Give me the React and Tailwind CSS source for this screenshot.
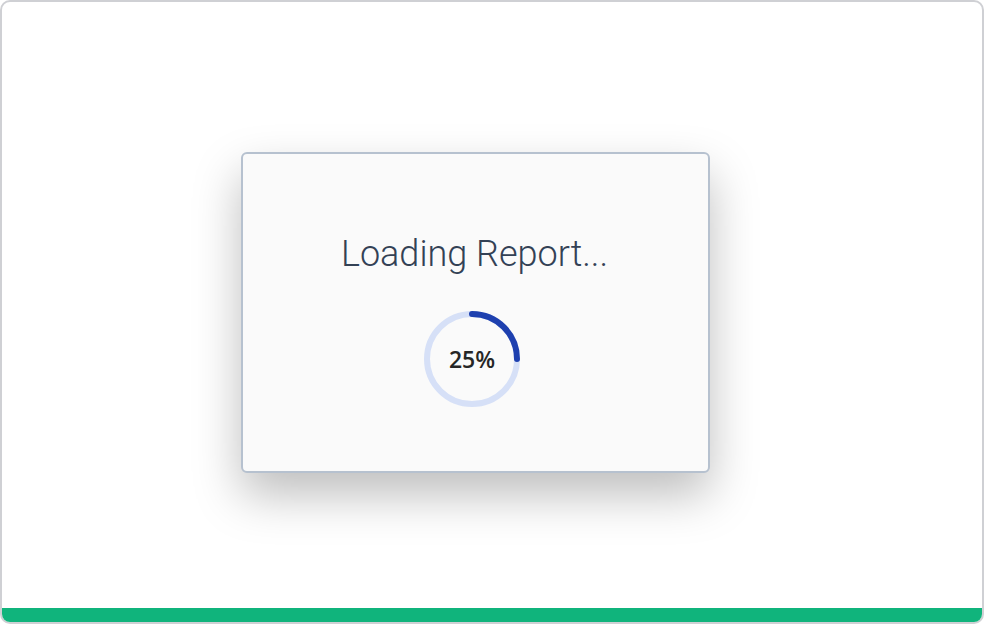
import React from "react";

export default function App() {
  const r = 45;
  const c = 2 * Math.PI * r;
  return (
    <div className="w-[984px] h-[624px] bg-white">
      <div className="w-full h-full rounded-[10px] border-2 border-[#cfd0d4] overflow-hidden flex flex-col bg-white">
        <div className="flex-1 flex items-center pl-[239px] pt-[15px]">
          <div className="w-[469px] h-[321px] rounded-[6px] border-2 border-[#b6c1cf] bg-[#fafafa] shadow-[0_22px_48px_rgba(0,0,0,0.26)] flex flex-col items-center">
            <div
              className="mt-[80px] text-[36px] leading-[40px] font-light text-[#334155] ml-[-2px]"
              style={{ fontFamily: "Roboto, sans-serif" }}
            >
              Loading Report...
            </div>
            <div className="relative mt-[35px] w-[100px] h-[100px] ml-[-7px]">
              <svg width="100" height="100" viewBox="0 0 100 100">
                <circle cx="50" cy="50" r={r} fill="none" stroke="#d6e0f7" strokeWidth="6" />
                <circle
                  cx="50"
                  cy="50"
                  r={r}
                  fill="none"
                  stroke="#1e40af"
                  strokeWidth="6"
                  strokeLinecap="round"
                  strokeDasharray={`${c * 0.25} ${c}`}
                  transform="rotate(-90 50 50)"
                />
              </svg>
              <div
                className="absolute inset-0 flex items-center justify-center text-[23px] font-semibold text-[#262626]"
                style={{ fontFamily: "'Open Sans', sans-serif" }}
              >
                25%
              </div>
            </div>
          </div>
        </div>
        <div className="h-[14px] bg-[#10b47c]" />
      </div>
    </div>
  );
}
